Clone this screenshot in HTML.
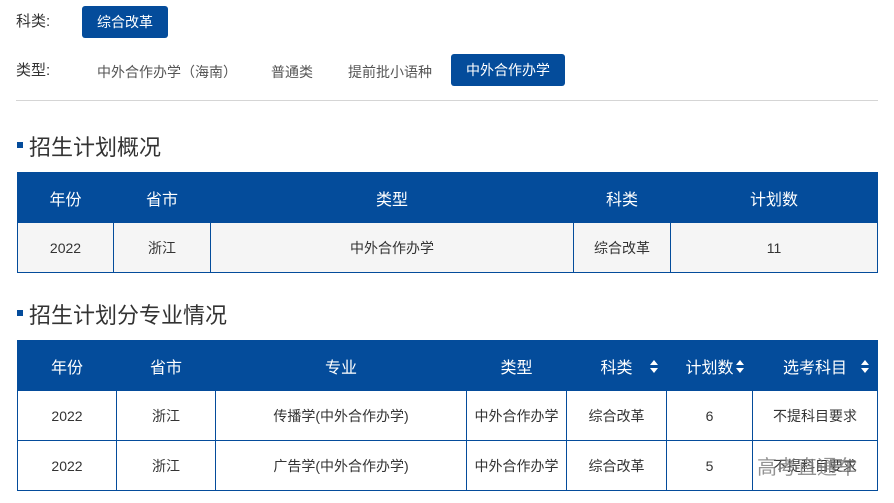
<!DOCTYPE html><html><head><meta charset="utf-8"><style>
*{margin:0;padding:0;box-sizing:border-box}
body{width:894px;height:503px;background:#fff;font-family:"Liberation Sans","Noto Sans CJK SC",sans-serif;color:#333;position:relative;overflow:hidden}
.a{position:absolute}
.lbl{font-size:15px;color:#333}
.btn{background:#044c9b;color:#fff;border-radius:3px;font-size:14px;text-align:center;line-height:32px}
.opt{font-size:14px;color:#555}
.h{font-size:22px;color:#333}
.sq{width:6px;height:6px;background:#044c9b}
table{position:absolute;border-collapse:collapse;table-layout:fixed;left:17px;width:860px}
td,th{border:1px solid #044c9b;text-align:center;font-size:14px;font-weight:normal}
th{background:#044c9b;color:#fff;font-size:16px;height:50px;border-left:1px solid #fff;position:relative}
th:first-child{border-left:1px solid #044c9b}
td{height:50px;color:#333}
.s::after{content:"";position:absolute;right:8px;top:19px;border:4px solid transparent;border-bottom:5px solid #fff;border-top:none}
.s::before{content:"";position:absolute;right:8px;top:27px;border:4px solid transparent;border-top:5px solid #fff;border-bottom:none}
</style></head><body>
<div class="a lbl" style="left:16px;top:10px">科类:</div>
<div class="a btn" style="left:82px;top:6px;width:86px;height:32px">综合改革</div>
<div class="a lbl" style="left:16px;top:59px">类型:</div>
<div class="a opt" style="left:97px;top:62px">中外合作办学（海南）</div>
<div class="a opt" style="left:271px;top:62px">普通类</div>
<div class="a opt" style="left:348px;top:62px">提前批小语种</div>
<div class="a btn" style="left:451px;top:54px;width:114px;height:32px">中外合作办学</div>
<div class="a" style="left:16px;top:100px;width:862px;height:1px;background:#d5d5d5"></div>
<div class="a sq" style="left:17px;top:142px"></div>
<div class="a h" style="left:29px;top:130px">招生计划概况</div>
<table style="top:172px"><colgroup><col width="96"><col width="97"><col width="363"><col width="97"><col width="207"></colgroup>
<tr><th>年份</th><th>省市</th><th>类型</th><th>科类</th><th>计划数</th></tr>
<tr style="background:#f5f5f5"><td>2022</td><td>浙江</td><td>中外合作办学</td><td>综合改革</td><td>11</td></tr></table>
<div class="a sq" style="left:17px;top:310px"></div>
<div class="a h" style="left:29px;top:298px">招生计划分专业情况</div>
<table style="top:340px"><colgroup><col width="99"><col width="99"><col width="251"><col width="100"><col width="100"><col width="86"><col width="125"></colgroup>
<tr><th>年份</th><th>省市</th><th>专业</th><th>类型</th><th class="s">科类</th><th class="s">计划数</th><th class="s">选考科目</th></tr>
<tr><td>2022</td><td>浙江</td><td>传播学(中外合作办学)</td><td>中外合作办学</td><td>综合改革</td><td>6</td><td>不提科目要求</td></tr>
<tr><td>2022</td><td>浙江</td><td>广告学(中外合作办学)</td><td>中外合作办学</td><td>综合改革</td><td>5</td><td>不提科目要求</td></tr></table>
<div class="a" style="left:757px;top:451px;font-size:20px;color:rgba(120,120,120,.8)">高考直通车</div>
</body></html>
